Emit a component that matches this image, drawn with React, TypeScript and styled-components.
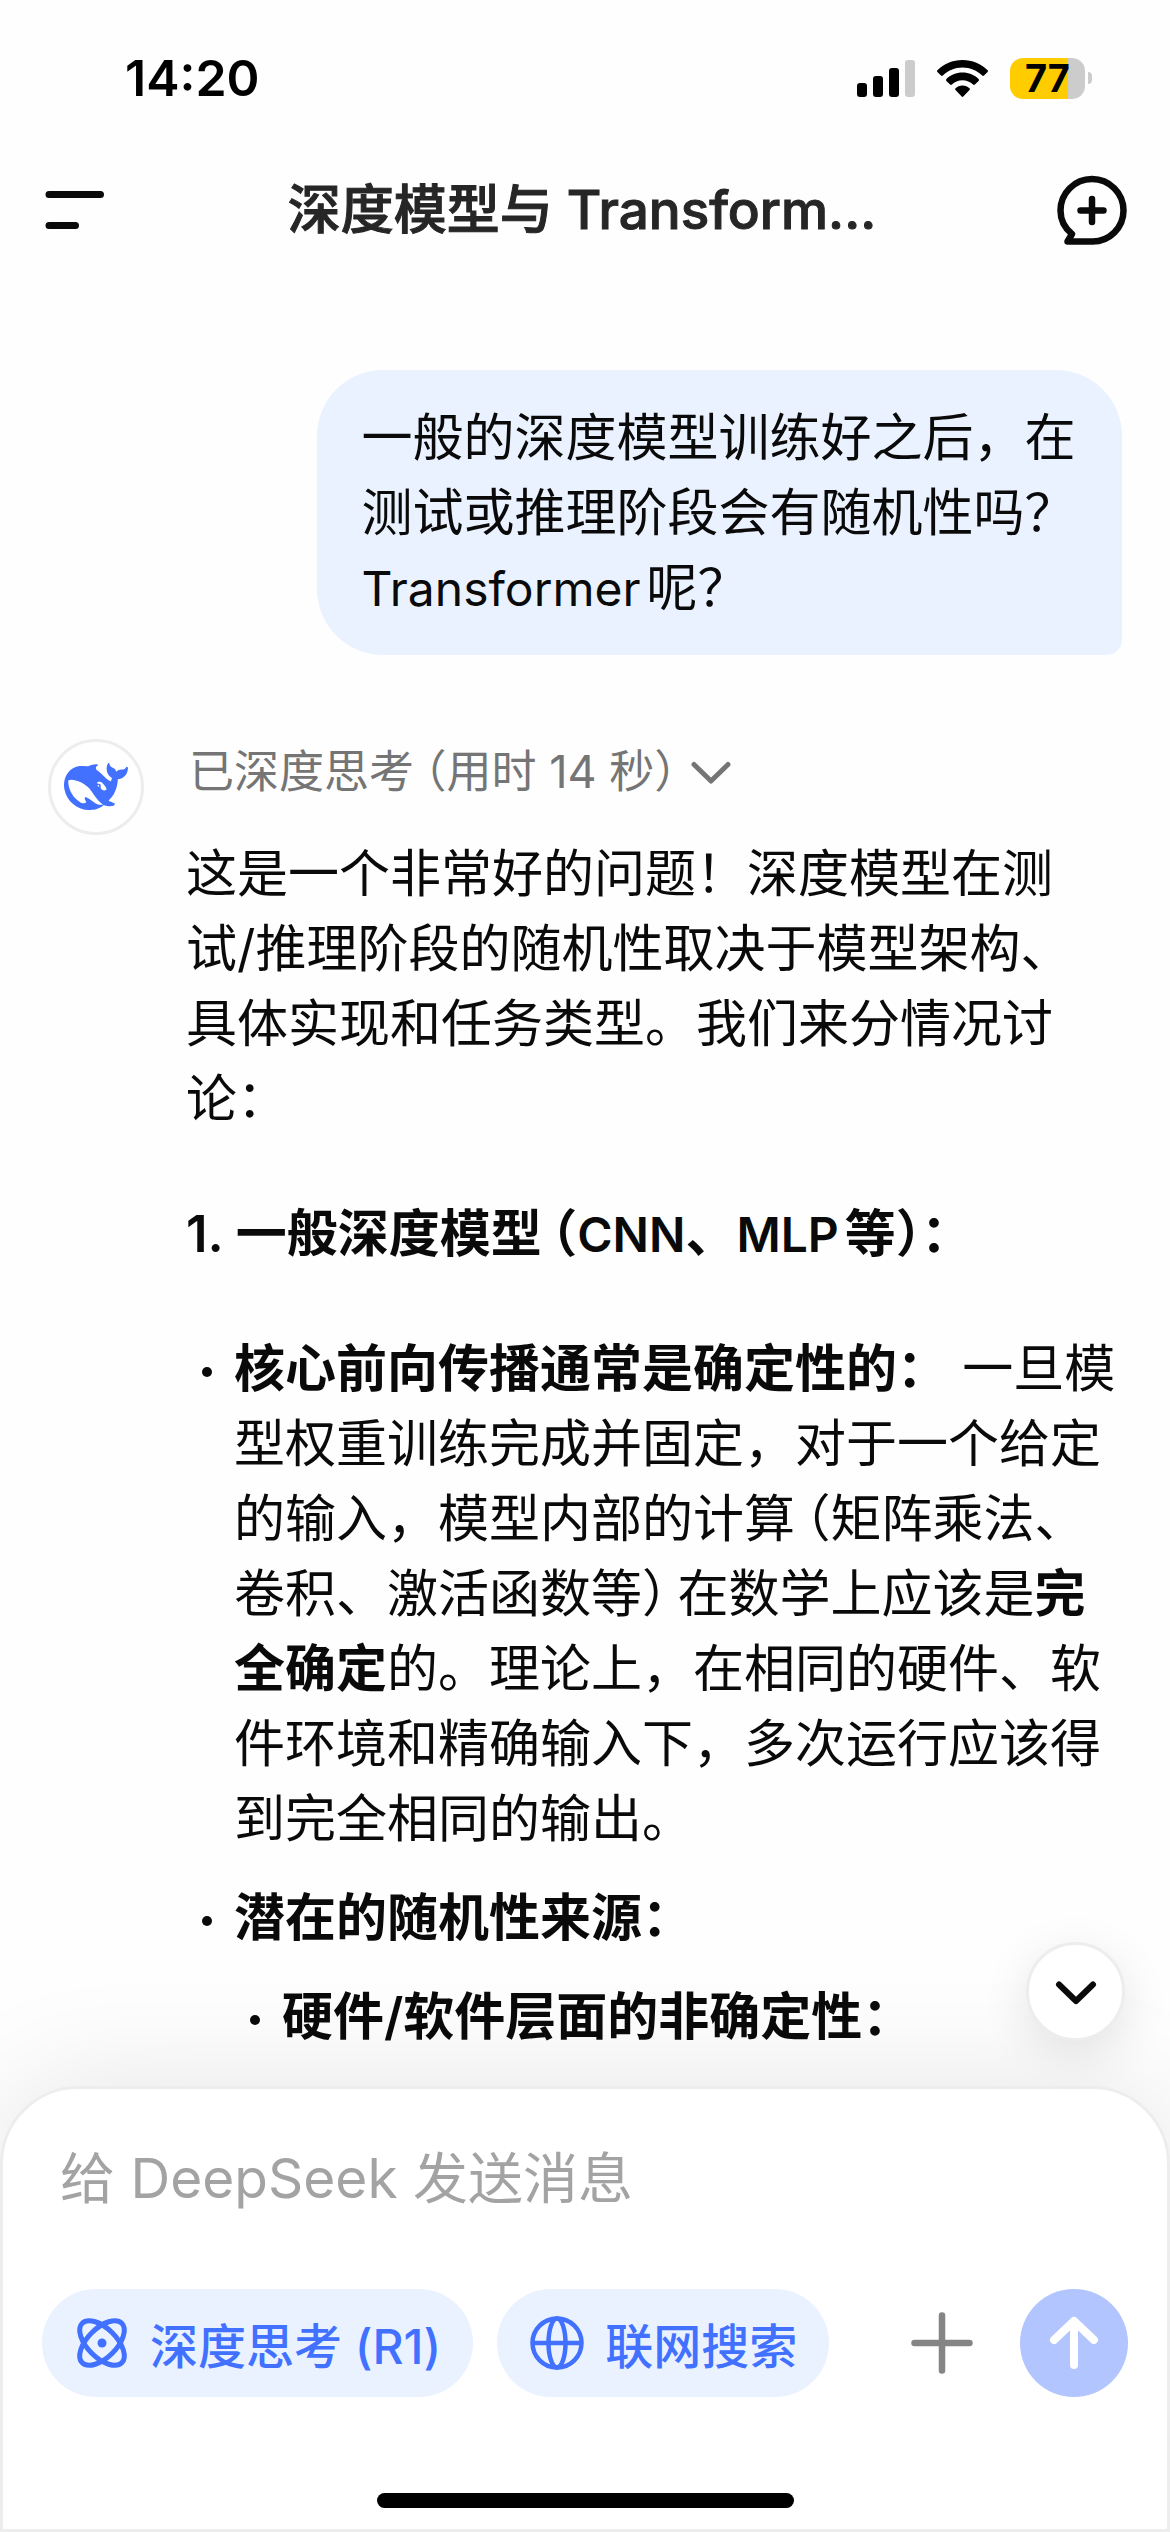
import React from "react";
import styled, { createGlobalStyle } from "styled-components";

const ink = "#0a0a0a";
const blue = "#4271ff";
const tint = "#ebf2ff";
const line = "#ededed";

const GlobalStyle = createGlobalStyle`
  *, *::before, *::after { box-sizing: border-box; }
  body {
    margin: 0;
    background: #fefefe;
    color: ${ink};
    font-family: Inter, "Noto Sans CJK SC", sans-serif;
    font-size: 51px;
    line-height: 75px;
    text-autospace: normal;
  }
  button, input { font-family: inherit; color: inherit; }
`;

const Screen = styled.div`
  display: flex;
  flex-direction: column;
  height: 100vh;
  overflow: hidden;
`;

const StatusBar = styled.div`
  display: flex;
  align-items: center;
  justify-content: space-between;
  flex: none;
  height: 156px;
  padding: 0 78px 0 125px;
`;

const Clock = styled.time`
  font-size: 50px;
  font-weight: 600;
  color: #000;
`;

const StatusIcons = styled.div`
  display: flex;
  align-items: center;
  gap: 22px;
`;

const Battery = styled.div`
  display: flex;
  align-items: center;
  gap: 3px;
`;

const BatteryBody = styled.div<{ $level: number }>`
  width: 75px;
  height: 41px;
  border-radius: 13px;
  background: linear-gradient(
    to right,
    #ffcc00 ${(p) => p.$level}%,
    #cccccc ${(p) => p.$level}%
  );
  color: #000;
  font-size: 38px;
  font-weight: 700;
  line-height: 41px;
  text-align: center;
`;

const BatteryNub = styled.div`
  width: 4px;
  height: 12px;
  border-radius: 0 6px 6px 0;
  background: #cccccc;
`;

const Header = styled.header`
  display: flex;
  align-items: center;
  justify-content: space-between;
  flex: none;
  height: 108px;
  padding: 0 42px;
`;

const IconButton = styled.button`
  display: flex;
  align-items: center;
  justify-content: center;
  padding: 0;
  border: 0;
  background: none;
`;

const Title = styled.h1`
  margin: 0;
  color: #262626;
  font-size: 53px;
  font-weight: 500;
  white-space: nowrap;
  -webkit-text-stroke: 1px currentColor;
`;

const Chat = styled.main`
  flex: 1;
  min-height: 0;
  padding: 106px 48px 0;
`;

const Bubble = styled.p`
  width: fit-content;
  max-width: 75%;
  margin: 0 0 84px auto;
  padding: 30px 45px;
  border-radius: 66px 66px 15px 66px;
  background: ${tint};
`;

const Reply = styled.article`
  display: flex;
  gap: 42px;
`;

const Avatar = styled.div`
  display: flex;
  align-items: center;
  justify-content: center;
  flex: none;
  width: 96px;
  height: 96px;
  border: 3px solid ${line};
  border-radius: 50%;
  background: #fff;
`;

const ReplyBody = styled.div`
  flex: 1;
  min-width: 0;
`;

const Thinking = styled.button`
  display: flex;
  align-items: center;
  gap: 3px;
  margin: 0 0 31px;
  padding: 0 3px;
  border: 0;
  background: none;
  font-size: 45px;
  line-height: 66px;

  && { color: #757575; }
`;

const Paragraph = styled.p`
  margin: 0 0 60px;
`;

const Heading = styled.h2`
  margin: 0 0 60px;
  font-size: 51px;
  font-weight: 600;
`;

const Strong = styled.strong`
  font-weight: 600;
`;

const Latin = styled.span`
  font-size: 48px;
  line-height: 1;
`;

const List = styled.ul`
  display: flex;
  flex-direction: column;
  gap: 24px;
  margin: 0;
  padding: 0;
  list-style: none;
`;

const Item = styled.li`
  display: grid;
  grid-template-columns: 48px minmax(0, 1fr);

  &::before {
    content: "";
    width: 10px;
    height: 10px;
    margin: 36px 0 0 16px;
    border-radius: 50%;
    background: ${ink};
  }
`;

const ItemBody = styled.div`
  display: flex;
  flex-direction: column;
  gap: 24px;
`;

const ItemText = styled.p`
  margin: 0;
`;

const Paren = styled.span<{ $side: "open" | "close" }>`
  font-feature-settings: "halt";
  ${(p) => (p.$side === "open" ? "margin-left: 10px;" : "margin-right: 10px;")}
`;

const Composer = styled.form`
  position: relative;
  display: flex;
  flex-direction: column;
  flex: none;
  padding: 51px 39px 21px;
  border: 3px solid ${line};
  border-radius: 78px 78px 0 0;
  background: #fff;
  box-shadow: 0 0 120px rgba(0, 0, 0, 0.1);
`;

const ScrollDown = styled.button`
  position: absolute;
  right: 42px;
  bottom: calc(100% + 48px);
  display: flex;
  align-items: center;
  justify-content: center;
  width: 99px;
  height: 99px;
  padding: 0;
  border: 3px solid ${line};
  border-radius: 50%;
  background: #fff;
  box-shadow: 0 12px 48px rgba(0, 0, 0, 0.1);
`;

const MessageInput = styled.input`
  width: 100%;
  height: 75px;
  margin-bottom: 74px;
  padding: 0 18px;
  border: 0;
  outline: 0;
  background: none;
  font-size: 55px;

  &::placeholder {
    color: #a3a3a3;
    opacity: 1;
  }
`;

const Toolbar = styled.div`
  display: flex;
  align-items: center;
  gap: 24px;
`;

const Chip = styled.button`
  display: flex;
  align-items: center;
  gap: 18px;
  height: 108px;
  padding: 0 32px 0 30px;
  border: 0;
  border-radius: 54px;
  background: ${tint};
  font-size: 48px;
  font-weight: 500;
  white-space: nowrap;

  && { color: ${blue}; }
`;

const Actions = styled.div`
  display: flex;
  align-items: center;
  gap: 42px;
  margin-left: auto;
`;

const SendButton = styled(IconButton)`
  width: 108px;
  height: 108px;
  border-radius: 50%;
  background: #b3c5ff;
`;

const HomeIndicator = styled.div`
  width: 417px;
  height: 15px;
  margin: 96px auto 0;
  border-radius: 8px;
  background: #000;
`;

const SignalIcon = () => (
  <svg width="58" height="37" viewBox="0 0 58 37" aria-hidden="true">
    <rect x="0" y="23" width="10" height="14" rx="3" />
    <rect x="16" y="16" width="10" height="21" rx="3" />
    <rect x="32" y="8" width="10" height="29" rx="3" />
    <rect x="48" y="0" width="10" height="37" rx="3" fill="#ccc" />
  </svg>
);

const WifiIcon = () => (
  <svg width="51" height="37" viewBox="0 0 51 37" aria-hidden="true">
    <path d="M25.5 0C35.4 0 44.4 3.900 50.600 10.200a1.300 1.300 0 0 1 0 1.800l-3.600 3.600a1.300 1.300 0 0 1-1.800 0C40.100 10.600 33.200 7.500 25.500 7.500S10.900 10.600 5.800 15.600a1.300 1.300 0 0 1-1.800 0L.4 12a1.300 1.300 0 0 1 0-1.800C6.600 3.900 15.600 0 25.500 0z" />
    <path d="M25.5 12.600c6.400 0 12.100 2.500 16.100 6.500.5.500.5 1.300 0 1.800l-3.700 3.700c-.5.500-1.300.5-1.800 0-2.700-2.700-6.400-4.400-10.600-4.400s-7.900 1.700-10.600 4.400c-.5.500-1.300.5-1.800 0l-3.700-3.700a1.300 1.300 0 0 1 0-1.800c4-4 9.700-6.500 16.100-6.500z" />
    <path d="M25.500 25.400c2.800 0 5.300 1.100 7 2.800.5.500.5 1.200 0 1.700l-6.200 6.600c-.5.500-1.100.5-1.600 0l-6.200-6.600c-.5-.5-.5-1.200 0-1.700 1.700-1.700 4.200-2.800 7-2.800z" />
  </svg>
);

const MenuIcon = () => (
  <svg width="66" height="66" viewBox="0 0 66 66" fill="none" stroke={ink} strokeWidth="7" strokeLinecap="round" aria-hidden="true">
    <path d="M7 17.500H58.500M7 48.500H33.500" />
  </svg>
);

const NewChatIcon = () => (
  <svg width="72" height="72" viewBox="0 0 72 72" fill="none" stroke={ink} strokeWidth="6.500" strokeLinecap="round" strokeLinejoin="round" aria-hidden="true">
    <path d="M36 67.500H11.500l4.500-7.500C9.200 54.500 4.500 46 4.500 36.500A31.500 31.500 0 0 1 36 5a31.500 31.500 0 0 1 31.500 31.500A31 31 0 0 1 36 67.500z" />
    <path d="M36 25v23M24.500 36.500h23" />
  </svg>
);

const WhaleLogo = () => (
  <svg width="64" height="64" viewBox="0 0 24 24" fill={blue} aria-hidden="true">
    <path d="M23.748 4.482c-.254-.124-.364.113-.512.234-.051.039-.094.09-.137.136-.372.397-.806.657-1.373.626-.829-.046-1.537.214-2.163.848-.133-.782-.575-1.248-1.247-1.548-.352-.156-.708-.311-.955-.65-.172-.241-.219-.51-.305-.774-.055-.16-.11-.323-.293-.35-.2-.031-.278.136-.356.276-.313.572-.434 1.202-.422 1.84.027 1.436.633 2.58 1.838 3.393.137.093.172.187.129.323-.082.28-.18.552-.266.833-.055.179-.137.217-.329.14a5.526 5.526 0 01-1.736-1.18c-.857-.828-1.631-1.742-2.597-2.458a11.365 11.365 0 00-.689-.471c-.985-.957.13-1.743.388-1.836.27-.098.093-.432-.779-.428-.872.004-1.67.295-2.687.684a3.055 3.055 0 01-.465.137 9.597 9.597 0 00-2.883-.102c-1.885.21-3.39 1.102-4.497 2.623C.082 8.606-.231 10.684.152 12.85c.403 2.284 1.569 4.175 3.36 5.653 1.858 1.533 3.997 2.284 6.438 2.14 1.482-.085 3.133-.284 4.994-1.86.47.234.962.327 1.78.397.63.059 1.236-.03 1.705-.128.735-.156.684-.837.419-.961-2.155-1.004-1.682-.595-2.113-.926 1.096-1.296 2.746-2.642 3.392-7.003.05-.347.007-.565 0-.845-.004-.17.035-.237.23-.256a4.173 4.173 0 001.545-.475c1.396-.763 1.96-2.015 2.093-3.517.02-.23-.004-.467-.247-.588zM11.581 18c-2.089-1.642-3.102-2.183-3.52-2.16-.392.024-.321.471-.235.763.09.288.207.486.371.739.114.167.192.416-.113.603-.673.416-1.842-.14-1.897-.167-1.361-.802-2.5-1.86-3.301-3.307-.774-1.393-1.224-2.887-1.298-4.482-.02-.386.093-.522.477-.592a4.696 4.696 0 011.529-.039c2.132.312 3.946 1.265 5.468 2.774.868.86 1.525 1.887 2.202 2.891.72 1.066 1.494 2.082 2.48 2.914.348.292.625.514.891.677-.802.09-2.14.11-3.054-.614zm1-6.44a.306.306 0 01.415-.287.302.302 0 01.2.288.306.306 0 01-.31.307.303.303 0 01-.304-.308zm3.11 1.596c-.2.081-.399.151-.59.16a1.245 1.245 0 01-.798-.254c-.274-.23-.47-.358-.552-.758a1.73 1.73 0 01.016-.588c.07-.327-.008-.537-.239-.727-.187-.156-.426-.199-.688-.199a.559.559 0 01-.254-.078c-.11-.054-.2-.19-.114-.358.028-.054.16-.186.192-.21.356-.202.767-.136 1.146.016.352.144.618.408 1.001.782.391.451.462.576.685.914.176.265.336.537.445.848.067.195-.019.354-.25.452z" />
  </svg>
);

const ChevronIcon = ({ stroke, weight }: { stroke: string; weight: number }) => (
  <svg width="42" height="42" viewBox="0 0 42 42" fill="none" stroke={stroke} strokeWidth={weight} strokeLinecap="round" strokeLinejoin="round" aria-hidden="true">
    <path d="M4 13.500l17 16.500 17-16.500" />
  </svg>
);

const AtomIcon = () => (
  <svg width="60" height="60" viewBox="0 0 60 60" fill="none" stroke={blue} strokeWidth="5" aria-hidden="true">
    <ellipse cx="30" cy="30" rx="28" ry="14.500" transform="rotate(45 30 30)" />
    <ellipse cx="30" cy="30" rx="28" ry="14.500" transform="rotate(-45 30 30)" />
    <circle cx="30" cy="30" r="4.500" fill={blue} stroke="none" />
  </svg>
);

const GlobeIcon = () => (
  <svg width="60" height="60" viewBox="0 0 60 60" fill="none" stroke={blue} strokeWidth="4.500" aria-hidden="true">
    <circle cx="30" cy="30" r="24.500" />
    <ellipse cx="30" cy="30" rx="8.500" ry="24.500" />
    <path d="M5.500 30h49" />
  </svg>
);

const PlusIcon = () => (
  <svg width="72" height="72" viewBox="0 0 72 72" fill="none" stroke="#858585" strokeWidth="6.500" strokeLinecap="round" aria-hidden="true">
    <path d="M36 8.500v55M8.500 36h55" />
  </svg>
);

const ArrowUpIcon = () => (
  <svg width="60" height="60" viewBox="0 0 60 60" fill="none" stroke="#fff" strokeWidth="8" strokeLinecap="round" strokeLinejoin="round" aria-hidden="true">
    <path d="M30 52V8M10 27L30 8l20 19" />
  </svg>
);

export default function App() {
  return (
    <Screen lang="zh-CN">
      <GlobalStyle />
      <StatusBar>
        <Clock>14:20</Clock>
        <StatusIcons>
          <SignalIcon />
          <WifiIcon />
          <Battery>
            <BatteryBody $level={78}>77</BatteryBody>
            <BatteryNub />
          </Battery>
        </StatusIcons>
      </StatusBar>

      <Header>
        <IconButton type="button" aria-label="菜单">
          <MenuIcon />
        </IconButton>
        <Title>深度模型与 Transform...</Title>
        <IconButton type="button" aria-label="新对话">
          <NewChatIcon />
        </IconButton>
      </Header>

      <Chat>
        <Bubble>
          一般的深度模型训练好之后，在测试或推理阶段会有随机性吗？<Latin>Transformer</Latin>呢？
        </Bubble>

        <Reply>
          <Avatar>
            <WhaleLogo />
          </Avatar>
          <ReplyBody>
            <Thinking type="button">
              <span>
                已深度思考<Paren $side="open">（</Paren>用时 14 秒<Paren $side="close">）</Paren>
              </span>
              <ChevronIcon stroke="#757575" weight={5} />
            </Thinking>

            <Paragraph>
              这是一个非常好的问题！深度模型在测试/推理阶段的随机性取决于模型架构、具体实现和任务类型。我们来分情况讨论：
            </Paragraph>

            <Heading>
              1. 一般深度模型<Paren $side="open">（</Paren>
              <Latin>CNN</Latin>、<Latin>MLP</Latin>等）：
            </Heading>

            <List>
              <Item>
                <ItemText>
                  <Strong>核心前向传播通常是确定性的：</Strong> 一旦模型权重训练完成并固定，对于一个给定的输入，模型内部的计算
                  <Paren $side="open">（</Paren>矩阵乘法、卷积、激活函数等<Paren $side="close">）</Paren>
                  在数学上应该是<Strong>完全确定</Strong>的。理论上，在相同的硬件、软件环境和精确输入下，多次运行应该得到完全相同的输出。
                </ItemText>
              </Item>
              <Item>
                <ItemBody>
                  <ItemText>
                    <Strong>潜在的随机性来源：</Strong>
                  </ItemText>
                  <List>
                    <Item>
                      <ItemText>
                        <Strong>硬件/软件层面的非确定性：</Strong>
                      </ItemText>
                    </Item>
                  </List>
                </ItemBody>
              </Item>
            </List>
          </ReplyBody>
        </Reply>
      </Chat>

      <Composer onSubmit={(e) => e.preventDefault()}>
        <ScrollDown type="button" aria-label="滚动到底部">
          <ChevronIcon stroke={ink} weight={6} />
        </ScrollDown>
        <MessageInput type="text" aria-label="消息" placeholder="给 DeepSeek 发送消息" />
        <Toolbar>
          <Chip type="button">
            <AtomIcon />
            深度思考 (R1)
          </Chip>
          <Chip type="button">
            <GlobeIcon />
            联网搜索
          </Chip>
          <Actions>
            <IconButton type="button" aria-label="添加附件">
              <PlusIcon />
            </IconButton>
            <SendButton type="submit" aria-label="发送">
              <ArrowUpIcon />
            </SendButton>
          </Actions>
        </Toolbar>
        <HomeIndicator />
      </Composer>
    </Screen>
  );
}
